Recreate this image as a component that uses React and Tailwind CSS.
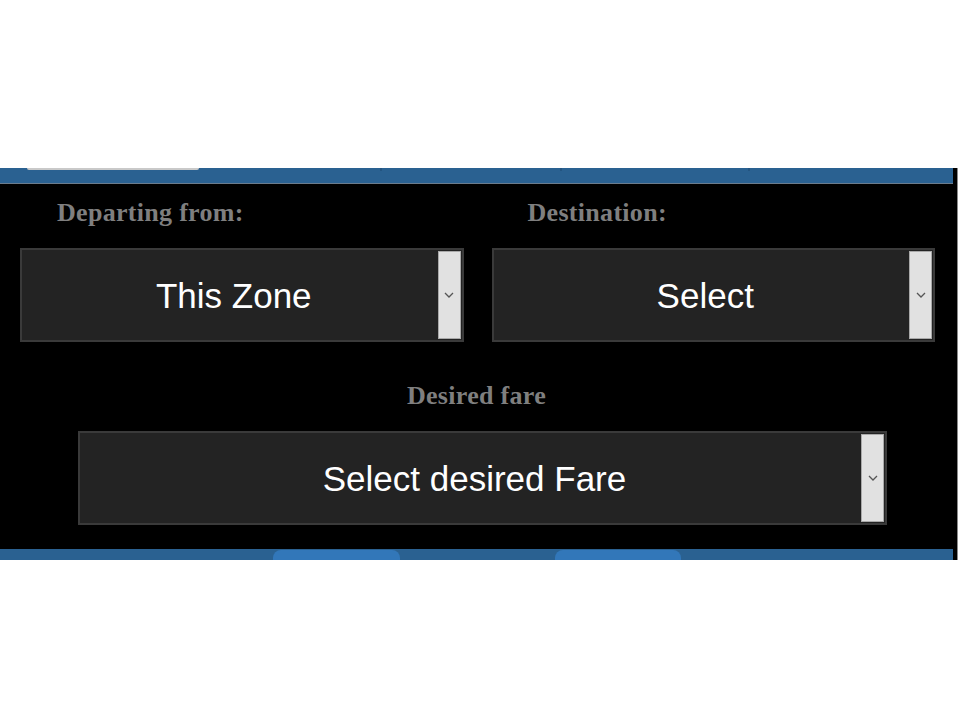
import React from "react";

const Chevron = () => (
  <svg width="10" height="6" viewBox="0 0 10 6" fill="none">
    <path d="M1 1l4 4 4-4" stroke="#555555" strokeWidth="1.3" />
  </svg>
);

const SelectBox = ({ text, className = "" }) => (
  <div
    className={`flex h-[94px] items-stretch border-2 border-[#3a3a3a] bg-[#232323] ${className}`}
  >
    <span className="flex flex-1 items-center justify-center pl-[8px] text-[35px] leading-none text-white [font-family:'Liberation_Sans',Arial,sans-serif]">
      {text}
    </span>
    <div className="my-[1px] mr-[1px] flex w-[23px] items-center justify-center border border-[#a9a9a9] bg-[#e1e1e1]">
      <Chevron />
    </div>
  </div>
);

const Label = ({ children, className = "" }) => (
  <div
    className={`h-[30px] text-[26px] font-bold leading-[30px] tracking-[0.3px] text-[#7f7f7f] [font-family:'Liberation_Serif','Times_New_Roman',serif] ${className}`}
  >
    {children}
  </div>
);

export default function App() {
  return (
    <div className="min-h-[720px] w-[960px] bg-white pt-[168px]">
      <div className="flex h-[392px] w-[958px] flex-col overflow-hidden border-r border-[#8a8a8a] bg-black">
        {/* top tab strip */}
        <div className="mr-[4px] flex h-[16px] border-b border-[#6b7c8c] bg-[#2a6191]">
          <div className="ml-[27px] h-[2px] w-[172px] rounded-b-sm bg-[#c9c9c9]" />
          <div className="ml-[181px] h-[3px] w-[2px] bg-[#245581]" />
          <div className="ml-[178px] h-[3px] w-[2px] bg-[#245581]" />
          <div className="ml-[186px] h-[3px] w-[2px] bg-[#245581]" />
        </div>

        <div className="grid grid-cols-2 gap-[28px] pl-[20px] pr-[22px] pt-[14px]">
          <div>
            <Label className="mb-[20px] pl-[37px]">Departing from:</Label>
            <SelectBox text="This Zone" />
          </div>
          <div>
            <Label className="mb-[20px] pl-[36px]">Destination:</Label>
            <SelectBox text="Select" />
          </div>
        </div>

        <Label className="mb-[20px] mt-[39px] pr-[4px] text-center">Desired fare</Label>
        <SelectBox text="Select desired Fare" className="ml-[78px] w-[809px]" />

        {/* bottom tab strip */}
        <div className="mr-[4px] mt-[24px] flex h-[11px] items-end bg-[#2a6191]">
          <div className="ml-[273px] h-[10px] w-[127px] rounded-t-[8px] bg-[#3277b9]" />
          <div className="ml-[155px] h-[10px] w-[126px] rounded-t-[8px] bg-[#3277b9]" />
        </div>
      </div>
    </div>
  );
}
